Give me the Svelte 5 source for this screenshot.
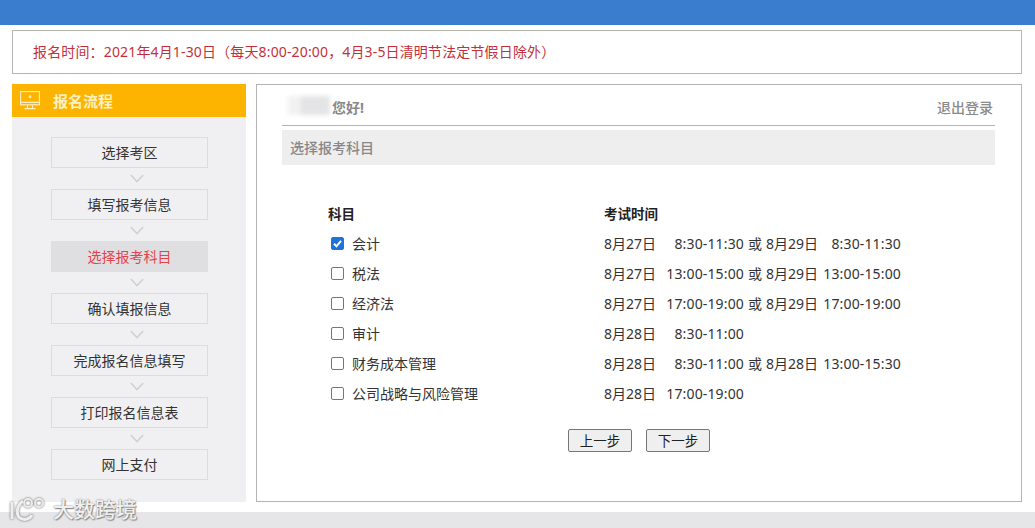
<script>
  const steps = [
    { label: '选择考区' },
    { label: '填写报考信息' },
    { label: '选择报考科目', active: true },
    { label: '确认填报信息' },
    { label: '完成报名信息填写' },
    { label: '打印报名信息表' },
    { label: '网上支付' }
  ];
  const subjects = [
    { name: '会计', checked: true, d1: '8月27日', t1: '8:30-11:30', d2: '8月29日', t2: '8:30-11:30' },
    { name: '税法', d1: '8月27日', t1: '13:00-15:00', d2: '8月29日', t2: '13:00-15:00' },
    { name: '经济法', d1: '8月27日', t1: '17:00-19:00', d2: '8月29日', t2: '17:00-19:00' },
    { name: '审计', d1: '8月28日', t1: '8:30-11:00' },
    { name: '财务成本管理', d1: '8月28日', t1: '8:30-11:00', d2: '8月28日', t2: '13:00-15:30' },
    { name: '公司战略与风险管理', d1: '8月28日', t1: '17:00-19:00' }
  ];
</script>

<div class="page">
  <header class="topbar"></header>
  <div class="notice">报名时间：2021年4月1-30日（每天8:00-20:00，4月3-5日清明节法定节假日除外）</div>

  <div class="columns">
    <aside class="side">
      <div class="side-head">
        <svg class="monitor" width="20" height="19" viewBox="0 0 20 19" fill="none" stroke="#fff0c0" stroke-width="1.1">
          <rect x="0.6" y="0.6" width="18.8" height="13.2" />
          <path d="M8.800 4.500h2.400v2.600H8.800z" fill="#fff0c0" stroke="none" />
          <path d="M0.600 11.400h18.800M7.500 14v3M12.500 14v3M4.500 17.600h11" />
        </svg>
        <span>报名流程</span>
      </div>
      <div class="steps">
        {#each steps as s, i}
          {#if i > 0}
            <svg class="chev" width="14" height="21" viewBox="0 0 14 21" fill="none" stroke="#d0d0d2" stroke-width="1.6"><path d="M0.800 7l6.200 6.500L13.200 7" /></svg>
          {/if}
          <div class="step" class:active={s.active}>{s.label}</div>
        {/each}
      </div>
    </aside>

    <main class="panel">
      <div class="hello">
        <div class="who"><span class="blur"></span><span>您好!</span></div>
        <span class="logout">退出登录</span>
      </div>
      <div class="title">选择报考科目</div>

      <div class="grid">
        <div class="th">科目</div>
        <div class="th">考试时间</div>
        {#each subjects as r}
          <label class="subj">
            <span class="box" class:on={r.checked}>
              {#if r.checked}
                <svg width="13" height="13" viewBox="0 0 13 13" fill="none" stroke="#fff" stroke-width="2"><path d="M3 6.800l2.500 2.500L10 3.800" /></svg>
              {/if}
            </span>
            <span>{r.name}</span>
          </label>
          <div class="time">
            <span class="date">{r.d1}</span><span class="hours">{r.t1}</span>
            {#if r.d2}
              <span class="or">或</span><span class="date">{r.d2}</span><span class="hours second">{r.t2}</span>
            {/if}
          </div>
        {/each}
      </div>

      <div class="actions">
        <button type="button">上一步</button>
        <button type="button">下一步</button>
      </div>
    </main>
  </div>

  <footer class="band"></footer>

  <div class="mark">
    <svg width="37" height="24" viewBox="0 0 37 24" fill="none" stroke="#eeeeee" stroke-width="3">
      <path d="M3 5v17" />
      <path d="M14 4C7 9 7 18 11 21c4.500 2.800 10 1 12-3" />
      <circle cx="19" cy="6" r="4" stroke-width="1.800" />
      <circle cx="30" cy="6" r="4" stroke-width="1.800" />
    </svg>
    <span>大数跨境</span>
  </div>
</div>

<style>
  :global(body) {
    margin: 0;
    background: #fff;
  }
  .page {
    position: relative;
    width: 1035px;
    height: 528px;
    overflow: hidden;
    font-family: "Noto Sans", "Noto Sans CJK SC", sans-serif;
    font-size: 14px;
    color: #333;
  }
  .topbar {
    height: 25px;
    background: #3a7dcf;
  }
  .notice {
    box-sizing: border-box;
    height: 44px;
    margin: 5px 13px 0 12px;
    padding: 0 20px;
    border: 1px solid #b4b4b4;
    color: #c4303a;
    line-height: 42px;
    letter-spacing: 0.15px;
    white-space: nowrap;
  }
  .columns {
    display: flex;
    gap: 10px;
    margin: 10px 13px 0 12px;
    height: 418px;
  }
  .side {
    flex: 0 0 234px;
    background: #f0f0f2;
  }
  .side-head {
    display: flex;
    align-items: center;
    gap: 13px;
    height: 33px;
    padding-left: 8px;
    background: #fdb400;
    color: #fff0c0;
    font-weight: 700;
    font-size: 15px;
  }
  .steps {
    display: flex;
    flex-direction: column;
    align-items: center;
    padding: 20px 38px 0 39px;
  }
  .step {
    box-sizing: border-box;
    width: 157px;
    height: 31px;
    border: 1px solid #dcdcde;
    color: #333;
    text-align: center;
    line-height: 30px;
    white-space: nowrap;
  }
  .step.active {
    background: #dfdfe1;
    border-color: #dfdfe1;
    color: #e2444c;
  }
  .chev {
    display: block;
    margin-left: 15px;
  }
  .panel {
    flex: 1;
    box-sizing: border-box;
    border: 1px solid #b4b4b4;
    padding: 0 26px 0 25px;
  }
  .hello {
    display: flex;
    justify-content: space-between;
    align-items: center;
    height: 37px;
    padding: 3px 2px 0 0;
    border-bottom: 1px solid #b4b4b4;
    color: #888;
    font-weight: 700;
    font-size: 14px;
  }
  .who {
    display: flex;
    align-items: center;
    gap: 2px;
  }
  .blur {
    width: 42px;
    height: 19px;
    margin: -2px 0 0 6px;
    background: linear-gradient(90deg, #f1f1f2 0 30%, #e4e4e6 30% 100%);
    filter: blur(2px);
  }
  .logout {
    font-weight: 500;
    color: #8a8a8a;
    font-size: 14px;
  }
  .title {
    height: 35px;
    margin-top: 4px;
    padding-left: 8px;
    background: #eeeeef;
    color: #888;
    font-weight: 500;
    font-size: 14px;
    line-height: 35px;
  }
  .grid {
    display: grid;
    grid-template-columns: 276px 1fr;
    grid-auto-rows: 30px;
    margin: 33px 0 0 46px;
    align-items: center;
  }
  .th {
    font-weight: 700;
    color: #222;
    font-size: 13.5px;
  }
  .subj {
    display: flex;
    align-items: center;
    gap: 8px;
    padding-left: 3px;
    color: #333;
  }
  .box {
    box-sizing: border-box;
    display: flex;
    width: 13px;
    height: 13px;
    margin-top: 1px;
    border: 1px solid #767676;
    border-radius: 2px;
    background: #fff;
  }
  .box.on {
    background: #1f72d8;
    border-color: #1f72d8;
  }
  .box svg {
    margin: -1px;
    flex: none;
  }
  .time {
    display: flex;
    align-items: center;
    white-space: nowrap;
    color: #333;
  }
  .date {
    width: 53px;
  }
  .hours {
    width: 87px;
    text-align: right;
    letter-spacing: 0.15px;
  }
  .hours.second {
    width: 82px;
  }
  .or {
    width: 18px;
    margin-left: 4px;
  }
  .actions {
    display: flex;
    justify-content: center;
    gap: 14px;
    margin-top: 21px;
    padding-left: 1px;
  }
  button {
    box-sizing: border-box;
    width: 64px;
    height: 23px;
    padding: 0;
    border: 1px solid #767676;
    border-radius: 2px;
    background: #efefef;
    color: #222;
    font: inherit;
    font-size: 13.5px;
    line-height: 20px;
  }
  .band {
    position: absolute;
    left: 0;
    right: 0;
    bottom: 0;
    height: 16px;
    background: #e6e5e7;
  }
  .mark {
    position: absolute;
    left: 9px;
    top: 495px;
    display: flex;
    align-items: center;
    gap: 7px;
    color: #f0f0f0;
    font-size: 21px;
    font-weight: 500;
    line-height: 28px;
    text-shadow: 0 0 2px #707070, 1px 1px 1px #909090;
  }
  .mark svg {
    filter: drop-shadow(0 0 1.2px #606060);
  }
</style>
